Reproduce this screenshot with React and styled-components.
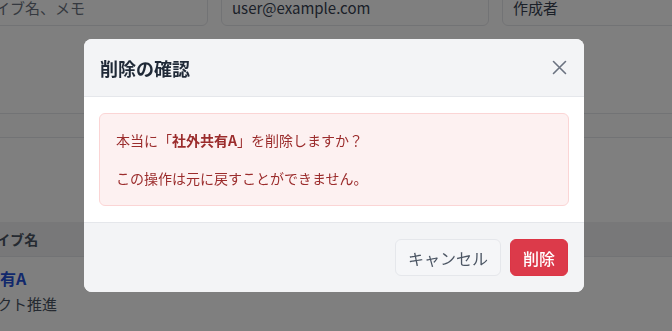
import React from 'react';
import styled, { createGlobalStyle } from 'styled-components';

const GlobalStyle = createGlobalStyle`
  * { box-sizing: border-box; }
  html, body {
    margin: 0;
    padding: 0;
    background: #ffffff;
    font-family: "Noto Sans CJK JP", "Noto Sans", sans-serif;
    overflow: hidden;
  }
`;

// 背景ページ
const Page = styled.div`
  width: 900px;
  height: 331px;
  margin-left: -60px;
`;

const FilterRow = styled.div`
  display: grid;
  grid-template-columns: repeat(3, 268px);
  gap: 13px;
  margin-top: -12px;
`;

const FilterInput = styled.div`
  height: 38px;
  border: 1px solid #e5e7eb;
  border-radius: 6px;
  padding: 0 10px;
  display: flex;
  align-items: center;
  font-size: 15px;
  color: ${({ $filled }) => ($filled ? '#374151' : '#6b7280')};
  white-space: nowrap;
  overflow: hidden;
`;

const Toolbar = styled.div`
  margin-top: 87px;
  height: 25px;
  border-top: 1px solid #e5e7eb;
  border-bottom: 1px solid #e5e7eb;
  background: #fcfcfd;
`;

const Table = styled.div`
  margin-top: 84px;
`;

const HeaderRow = styled.div`
  height: 35px;
  background: #f0f1f3;
  border-bottom: 1px solid #e5e7eb;
  display: flex;
  align-items: center;
  padding: 0 15px;
  font-size: 14px;
  font-weight: 700;
  color: #4b5563;
`;

const BodyRow = styled.div`
  height: 66px;
  border-bottom: 1px solid #e5e7eb;
  padding: 10px 12px 0;
  display: flex;
  flex-direction: column;
  gap: 4px;
`;

const RowTitle = styled.div`
  font-size: 16px;
  font-weight: 700;
  color: #2450d8;
  line-height: 22px;
`;

const RowSub = styled.div`
  font-size: 15px;
  color: #4b5563;
  line-height: 22px;
  margin-left: -15px;
  white-space: nowrap;
`;

// モーダル
const Overlay = styled.div`
  position: fixed;
  inset: 0;
  background: rgba(0, 0, 0, 0.5);
  display: flex;
  align-items: center;
  justify-content: center;
  padding-right: 4px;
`;

const Modal = styled.div`
  width: 500px;
  background: #ffffff;
  border-radius: 8px;
  overflow: hidden;
`;

const ModalHeader = styled.div`
  height: 58px;
  padding: 0 14px 0 16px;
  display: flex;
  align-items: center;
  justify-content: space-between;
  background: #f3f4f6;
  border-bottom: 1px solid #e5e7eb;
`;

const Title = styled.h2`
  margin: 0;
  font-size: 18px;
  font-weight: 700;
  color: #1f2937;
`;

const CloseButton = styled.button`
  width: 22px;
  height: 22px;
  padding: 0;
  border: none;
  background: none;
  display: flex;
  align-items: center;
  justify-content: center;
  color: #6b7280;
  cursor: pointer;
`;

const ModalBody = styled.div`
  padding: 16px 15px;
`;

const Alert = styled.div`
  background: #fdf1f1;
  border: 1px solid #fbd5d5;
  border-radius: 6px;
  padding: 16px;
  color: #9b2c2c;
  font-size: 14px;
  line-height: 21px;

  p {
    margin: 0;
  }

  p + p {
    margin-top: 17px;
  }

  strong {
    font-weight: 700;
  }
`;

const ModalFooter = styled.div`
  padding: 16px;
  display: flex;
  justify-content: flex-end;
  gap: 9px;
  background: #f3f4f6;
  border-top: 1px solid #e5e7eb;
`;

const Button = styled.button`
  height: 37px;
  padding: 0 ${({ $danger }) => ($danger ? '12px' : '12px')};
  border-radius: 6px;
  border: 1px solid ${({ $danger }) => ($danger ? '#dc3545' : '#e5e7eb')};
  background: ${({ $danger }) => ($danger ? '#dc3a4a' : '#f5f6f8')};
  color: ${({ $danger }) => ($danger ? '#ffffff' : '#4b5563')};
  font-family: "Noto Sans CJK JP", "Noto Sans", sans-serif;
  font-size: 16px;
  font-weight: ${({ $danger }) => ($danger ? 500 : 400)};
  cursor: pointer;
`;

const CloseIcon = () => (
  <svg width="15" height="15" viewBox="0 0 15 15" fill="none" stroke="currentColor" strokeWidth="1.6" strokeLinecap="round">
    <path d="M1.5 1.5 L13.5 13.5 M13.5 1.5 L1.5 13.5" />
  </svg>
);

export default function App() {
  return (
    <>
      <GlobalStyle />
      <Page>
        <FilterRow>
          <FilterInput>アーカイブ名、メモ</FilterInput>
          <FilterInput $filled>user@example.com</FilterInput>
          <FilterInput $filled>作成者</FilterInput>
        </FilterRow>
        <Toolbar />
        <Table>
          <HeaderRow>アーカイブ名</HeaderRow>
          <BodyRow>
            <RowTitle>社外共有A</RowTitle>
            <RowSub>プロジェクト推進</RowSub>
          </BodyRow>
        </Table>
      </Page>
      <Overlay>
        <Modal role="dialog" aria-modal="true">
          <ModalHeader>
            <Title>削除の確認</Title>
            <CloseButton aria-label="閉じる">
              <CloseIcon />
            </CloseButton>
          </ModalHeader>
          <ModalBody>
            <Alert>
              <p>本当に「<strong>社外共有A</strong>」を削除しますか？</p>
              <p>この操作は元に戻すことができません。</p>
            </Alert>
          </ModalBody>
          <ModalFooter>
            <Button>キャンセル</Button>
            <Button $danger>削除</Button>
          </ModalFooter>
        </Modal>
      </Overlay>
    </>
  );
}
